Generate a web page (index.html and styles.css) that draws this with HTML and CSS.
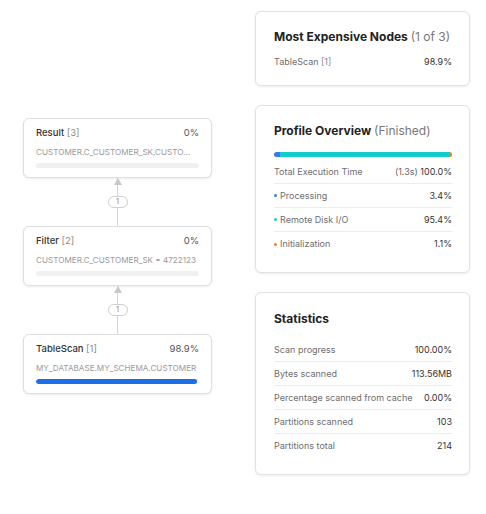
FILE: index.html
```html
<!DOCTYPE html>
<html>
<head>
<meta charset="utf-8">
<link rel="stylesheet" href="styles.css">
</head>
<body>
<div class="page">
  <div class="graph">
    <div class="node">
      <div class="node-head"><span class="node-name">Result <span class="node-id">[3]</span></span><span class="node-pct">0%</span></div>
      <div class="node-desc">CUSTOMER.C_CUSTOMER_SK,CUSTO...</div>
      <div class="node-bar"><div class="node-fill" style="width:0%"></div></div>
    </div>
    <div class="edge">
      <svg class="arrow" width="10" height="8" viewBox="0 0 10 8"><path d="M5 0 L9 7 L1 7 Z" fill="#c8c8c8"/></svg>
      <div class="edge-line top"></div>
      <div class="edge-badge">1</div>
      <div class="edge-line bottom"></div>
    </div>
    <div class="node">
      <div class="node-head"><span class="node-name">Filter <span class="node-id">[2]</span></span><span class="node-pct">0%</span></div>
      <div class="node-desc">CUSTOMER.C_CUSTOMER_SK = 4722123</div>
      <div class="node-bar"><div class="node-fill" style="width:0%"></div></div>
    </div>
    <div class="edge">
      <svg class="arrow" width="10" height="8" viewBox="0 0 10 8"><path d="M5 0 L9 7 L1 7 Z" fill="#c8c8c8"/></svg>
      <div class="edge-line top"></div>
      <div class="edge-badge">1</div>
      <div class="edge-line bottom"></div>
    </div>
    <div class="node">
      <div class="node-head"><span class="node-name">TableScan <span class="node-id">[1]</span></span><span class="node-pct">98.9%</span></div>
      <div class="node-desc">MY_DATABASE.MY_SCHEMA.CUSTOMER</div>
      <div class="node-bar"><div class="node-fill blue" style="width:98.9%"></div></div>
    </div>
  </div>

  <div class="side">
    <div class="card">
      <div class="card-title">Most Expensive Nodes <span class="muted">(1 of 3)</span></div>
      <div class="exp-row"><span class="label">TableScan <span class="node-id">[1]</span></span><span class="value">98.9%</span></div>
    </div>

    <div class="card">
      <div class="card-title">Profile Overview <span class="muted">(Finished)</span></div>
      <div class="pbar">
        <div class="seg blue" style="width:3.4%"></div>
        <div class="seg teal" style="width:95.4%"></div>
        <div class="seg orange" style="width:1.2%"></div>
      </div>
      <div class="row"><span class="label">Total Execution Time</span><span class="value"><span class="soft">(1.3s)</span> 100.0%</span></div>
      <div class="row"><span class="label"><i class="dot blue"></i>Processing</span><span class="value">3.4%</span></div>
      <div class="row"><span class="label"><i class="dot teal"></i>Remote Disk I/O</span><span class="value">95.4%</span></div>
      <div class="row"><span class="label"><i class="dot orange"></i>Initialization</span><span class="value">1.1%</span></div>
    </div>

    <div class="card stats">
      <div class="card-title">Statistics</div>
      <div class="row"><span class="label">Scan progress</span><span class="value">100.00%</span></div>
      <div class="row"><span class="label">Bytes scanned</span><span class="value">113.56MB</span></div>
      <div class="row"><span class="label">Percentage scanned from cache</span><span class="value">0.00%</span></div>
      <div class="row"><span class="label">Partitions scanned</span><span class="value">103</span></div>
      <div class="row"><span class="label">Partitions total</span><span class="value">214</span></div>
    </div>
  </div>
</div>
</body>
</html>
```

FILE: styles.css
```css
* { box-sizing: border-box; }
html, body { margin: 0; padding: 0; background: #fff; }
body {
  font-family: Inter, "Noto Sans", "Liberation Sans", sans-serif;
  color: #333;
  width: 486px;
  height: 514px;
  overflow: hidden;
}
.page {
  display: flex;
  align-items: flex-start;
}
.graph {
  width: 189px;
  margin: 118px 0 0 23px;
  display: flex;
  flex-direction: column;
}
.node {
  height: 60px;
  border: 1px solid #dedede;
  border-radius: 6px;
  background: #fff;
  box-shadow: 0 1px 3px rgba(0,0,0,0.08);
  padding: 8px 12px 0 12px;
}
.node-head {
  display: flex;
  justify-content: space-between;
  font-size: 9.5px;
  line-height: 12px;
  height: 12px;
}
.node-name { color: #333; font-weight: 500; }
.node-id { color: #8a8a8a; font-weight: 400; }
.node-pct { color: #555; }
.node-desc {
  margin-top: 7px;
  font-size: 8.15px;
  line-height: 12px;
  color: #9a9a9a;
  white-space: nowrap;
  overflow: hidden;
}
.node-bar {
  margin-top: 5px;
  height: 5px;
  border-radius: 3px;
  background: #f0f0f0;
  overflow: hidden;
}
.node-fill { height: 100%; border-radius: 3px; }
.node-fill.blue { background: #1a6ee6; }

.edge {
  height: 48px;
  position: relative;
  display: flex;
  flex-direction: column;
  align-items: center;
}
.arrow { position: absolute; top: 0; left: 89.5px; }
.edge-line { width: 1px; background: #d4d4d4; }
.edge-line.top { height: 18px; }
.edge-line.bottom { flex: 1; }
.edge-badge {
  width: 20px;
  height: 12px;
  border: 1px solid #cfcfcf;
  border-radius: 6px;
  font-size: 7.5px;
  line-height: 10px;
  text-align: center;
  color: #a08a6a;
  background: #fff;
}

.side {
  width: 215px;
  margin: 11px 0 0 43px;
  display: flex;
  flex-direction: column;
  gap: 19px;
}
.card {
  border: 1px solid #e2e2e2;
  border-radius: 6px;
  background: #fff;
  box-shadow: 0 1px 3px rgba(0,0,0,0.08);
  padding: 17px 17px 16px 18px;
}
.card-title {
  font-size: 12px;
  line-height: 16px;
  font-weight: 700;
  color: #222;
  white-space: nowrap;
}
.card-title .muted { font-weight: 400; color: #777; }
.exp-row {
  margin-top: 10px;
  display: flex;
  justify-content: space-between;
  font-size: 9px;
  line-height: 14px;
}
.label { color: #6e6e6e; }
.value { color: #333; }
.soft { color: #666; }
.pbar {
  margin-top: 13px;
  margin-bottom: 3px;
  height: 5px;
  border-radius: 3px;
  overflow: hidden;
  display: flex;
}
.seg { height: 100%; }
.blue { background: #3b7be8; }
.teal { background: #13cdcd; }
.orange { background: #f07f2c; }
.row {
  height: 24px;
  display: flex;
  justify-content: space-between;
  align-items: center;
  font-size: 9px;
  border-bottom: 1px solid #ececec;
  padding-bottom: 1px;
}
.row:last-child { border-bottom: none; }
.stats .card-title { margin-top: 1px; margin-bottom: 11px; }
.dot {
  display: inline-block;
  width: 3px;
  height: 3px;
  border-radius: 50%;
  margin: 0 3px 1px 0;
  vertical-align: middle;
}
```
